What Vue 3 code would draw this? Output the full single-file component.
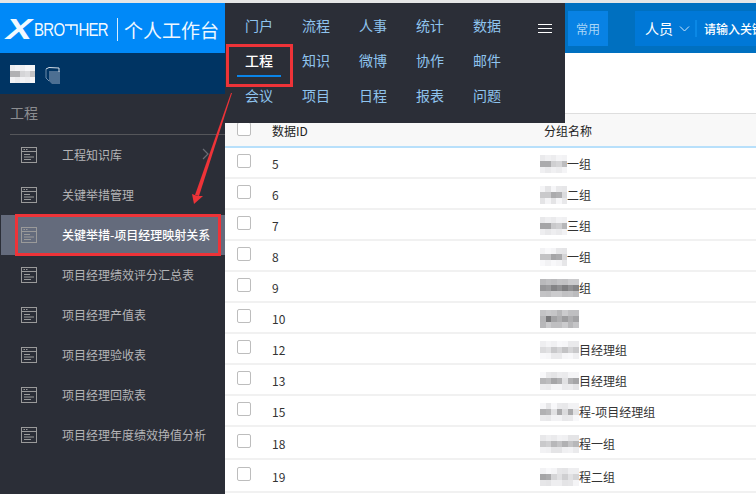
<template>
  <div class="page">
    <div class="top-strip"></div>

    <header class="header">
      <div class="brand">
        <span class="logo"><b class="logo-x">X</b><span class="logo-word">BRO</span><svg class="logo-t" viewBox="0 0 13 16" width="13" height="16"><path d="M0 4h12v10M6 4v5" fill="none" stroke="#fff" stroke-width="1.4" /></svg><span class="logo-word">HER</span></span>
        <span class="brand-line"></span>
        <span class="brand-title">个人工作台</span>
      </div>
      <div class="header-right">
        <span class="common">常用</span>
        <div class="search">
          <span class="search-type">人员</span>
          <svg class="chev" viewBox="0 0 11 6" width="11" height="6"><path d="M1 .5l4.5 4.5L10 .5" fill="none" stroke="#cfe6fa" stroke-width="1" /></svg>
          <span class="search-sep"></span>
          <span class="search-text">请输入关键</span>
        </div>
      </div>
    </header>

    <div class="content">
      <aside class="sidebar">
        <div class="user-bar">
          <Mosaic :cols="5" :rows="3" :width="25" :seed="3" dark />
          <svg viewBox="0 0 16 18" width="16" height="18" class="user-icon">
            <path d="M4 5h11v13H7l-3-3z" fill="#4d6f92" />
            <path d="M1 3l3-1.500 10 .5v4" fill="none" stroke="#d5dde6" stroke-width="1" />
            <path d="M1 3v9l3 3" fill="none" stroke="#6f8cab" stroke-width="1" />
          </svg>
        </div>
        <div class="side-title">工程</div>
        <ul class="side-menu">
          <li v-for="item in menu" :key="item" :class="['side-item', { active: item === activeItem }]">
            <svg class="doc" viewBox="0 0 16 16" width="16" height="16">
              <rect x="0.5" y="0.5" width="15" height="15" fill="none" stroke="#9a9a9a" />
              <path d="M1 4.500h14M3 7.500h6M3 10h10M3 12.500h7M2.500 2.500h1.500M5 2.500h1.500" fill="none" stroke="#9a9a9a" stroke-width="1" />
            </svg>
            <span>{{ item }}</span>
            <svg v-if="item === menu[0]" class="side-arrow" viewBox="0 0 8 12" width="8" height="12">
              <path d="M1 1l5 5-5 5" fill="none" stroke="#6a6d75" stroke-width="1.2" />
            </svg>
          </li>
        </ul>
      </aside>

      <main class="main">
        <div class="toolbar"></div>
        <div class="row head">
          <span class="check"></span>
          <span class="col-id">数据ID</span>
          <span class="col-name">分组名称</span>
        </div>
        <div v-for="(row, i) in rows" :key="row.id" :class="['row', { tall: i > 8 }]">
          <span class="check"></span>
          <span class="col-id">{{ row.id }}</span>
          <span class="col-name">
            <Mosaic class="blur" :cols="row.cols" :rows="3" :width="row.width" :seed="row.id" :deep="row.deep" />
            <span class="name-text">{{ row.name }}</span>
          </span>
        </div>
      </main>
    </div>

    <nav class="nav-panel">
      <div class="nav-grid">
        <a v-for="item in nav" :key="item" :class="['nav-item', { current: item === '工程' }]">{{ item }}</a>
      </div>
      <span class="burger"><i></i><i></i><i></i></span>
    </nav>

    <div class="mark side-mark"></div>
    <svg class="pointer" viewBox="0 0 756 494" width="756" height="494">
      <path d="M231 93L232 93 199 196 195 195z" fill="#ee3338" />
      <path d="M192 194L194 204 203 196 197.500 196z" fill="#ee3338" />
    </svg>
  </div>
</template>

<script setup>
import { h } from "vue"

// pixelated patch standing in for the blurred-out names
const Mosaic = (props) => {
  const cells = []
  const total = props.cols * props.rows
  for (let i = 0; i < total; i++) {
    const line = Math.floor(i / props.cols)
    const n = (i * i * 3 + props.seed * 5) % 11
    let background
    if (props.dark) {
      const v = line === 2 ? 235 : 95 + n * 9
      background = `rgb(${v},${v + 8},${v + 25})`
    } else {
      const base = line === 1 ? 165 : 228
      const spread = line === 1 ? 6 : 2
      const v = base + n * spread - (props.deep ? 45 : 0)
      background = `rgb(${v},${v},${v + 2})`
    }
    cells.push(h("i", { style: { width: 100 / props.cols + "%", height: (props.dark ? 5 : 6) + "px", background } }))
  }
  return h("span", {
    class: "mosaic",
    style: { width: props.width + "px", display: "inline-flex", flexWrap: "wrap", flexShrink: 0 }
  }, cells)
}
Mosaic.props = ["cols", "rows", "width", "seed", "dark", "deep"]

const activeItem = "关键举措-项目经理映射关系"

const menu = [
  "工程知识库",
  "关键举措管理",
  "关键举措-项目经理映射关系",
  "项目经理绩效评分汇总表",
  "项目经理产值表",
  "项目经理验收表",
  "项目经理回款表",
  "项目经理年度绩效挣值分析"
]

const nav = [
  "门户", "流程", "人事", "统计", "数据",
  "工程", "知识", "微博", "协作", "邮件",
  "会议", "项目", "日程", "报表", "问题"
]

const rows = [
  { id: 5, cols: 5, width: 27, name: "一组" },
  { id: 6, cols: 5, width: 27, name: "二组" },
  { id: 7, cols: 5, width: 27, name: "三组" },
  { id: 8, cols: 5, width: 27, name: "一组" },
  { id: 9, cols: 7, width: 39, name: "组", deep: true },
  { id: 10, cols: 7, width: 39, name: "", deep: true },
  { id: 12, cols: 7, width: 39, name: "目经理组" },
  { id: 13, cols: 7, width: 39, name: "目经理组" },
  { id: 15, cols: 7, width: 39, name: "程-项目经理组" },
  { id: 18, cols: 7, width: 39, name: "程一组" },
  { id: 19, cols: 7, width: 39, name: "程二组" }
]
</script>

<style>
html, body {
  margin: 0;
  background: #fff;
}
</style>

<style scoped>
.page {
  position: relative;
  width: 756px;
  height: 494px;
  overflow: hidden;
  font-family: "Noto Sans CJK SC", "Liberation Sans", sans-serif;
  font-size: 12px;
  color: #333;
}

.top-strip {
  height: 3px;
  background: #e6e6e6;
}

.header {
  display: flex;
  height: 50px;
  background: #0070c0;
}

.brand {
  width: 225px;
  flex-shrink: 0;
  display: flex;
  align-items: center;
  padding: 2px 0 0 6px;
  box-sizing: border-box;
  background: #0089f8;
  color: #fff;
}

.logo {
  display: flex;
  align-items: center;
  width: 105px;
  flex-shrink: 0;
  font-family: "Liberation Sans", sans-serif;
  font-size: 15px;
  color: #f2f9ff;
}

.logo-x {
  display: inline-block;
  width: 28px;
  font-size: 30px;
  font-style: italic;
  transform: scaleX(1.3);
  transform-origin: left center;
}

.logo-word {
  display: inline-block;
  letter-spacing: -0.7px;
  transform: scaleY(1.25);
}

.logo-t {
  flex-shrink: 0;
  margin-left: 1px;
}

.brand-line {
  width: 1px;
  height: 23px;
  margin: 0 6px;
  flex-shrink: 0;
  background: #d5ecff;
}

.brand-title {
  font-size: 19px;
  white-space: nowrap;
  color: #eef7ff;
}

.header-right {
  flex: 1;
  min-width: 0;
  display: flex;
  align-items: center;
  padding-left: 343px;
}

.common {
  width: 40px;
  height: 35px;
  margin-right: 27px;
  flex-shrink: 0;
  line-height: 35px;
  text-align: center;
  background: #0882e4;
  color: #a9d6f7;
}

.search {
  flex: 1;
  min-width: 0;
  height: 35px;
  display: flex;
  align-items: center;
  padding-left: 10px;
  background: #0078d7;
  color: #fff;
  white-space: nowrap;
  overflow: hidden;
}

.search-type {
  font-size: 14px;
}

.chev {
  margin: 1px 5px 0 6px;
  flex-shrink: 0;
}

.search-sep {
  width: 2px;
  height: 17px;
  margin-right: 7px;
  flex-shrink: 0;
  background: #0a88e6;
}

.search-text {
  font-weight: 500;
}

.content {
  display: flex;
  height: 441px;
}

.sidebar {
  width: 225px;
  flex-shrink: 0;
  background: #2b2e37;
}

.user-bar {
  height: 41px;
  display: flex;
  align-items: center;
  gap: 10px;
  padding-left: 10px;
  box-sizing: border-box;
  background: #003463;
}

.user-icon {
  margin-top: 2px;
}

.side-title {
  height: 41px;
  margin-left: 10px;
  line-height: 37px;
  box-sizing: border-box;
  border-bottom: 1px solid #55565a;
  font-size: 14px;
  color: #8c8d91;
}

.side-menu {
  margin: 0;
  padding: 0;
  list-style: none;
}

.side-item {
  position: relative;
  height: 40px;
  display: flex;
  align-items: center;
  margin-left: 1px;
  padding-left: 20px;
  color: #b4b4b6;
}

.side-item span {
  margin: 0 0 2px 25px;
  white-space: nowrap;
}

.side-item.active {
  background: #646b7c;
  color: #fff;
  font-weight: 500;
}

.side-arrow {
  position: absolute;
  right: 15px;
  top: 13px;
}

.main {
  flex: 1;
  min-width: 0;
}

.toolbar {
  height: 60px;
  background: #fff;
}

.row {
  height: 31px;
  display: flex;
  align-items: center;
  box-sizing: border-box;
  border-bottom: 2px solid #f1f1f1;
  color: #333;
}

.row.tall {
  height: 33px;
}

.row.head {
  height: 35px;
  background: #f8f8f8;
  border-top: 1px solid #dedede;
  border-bottom: 2px solid #b8e0fb;
  color: #222;
}

.check {
  width: 14px;
  height: 14px;
  margin: -3px 0 0 12px;
  box-sizing: border-box;
  flex-shrink: 0;
  border: 1px solid #bdbdbd;
  border-radius: 2px;
  background: #fff;
}

.col-id {
  width: 272px;
  margin-left: 21px;
  flex-shrink: 0;
  padding-top: 2px;
  box-sizing: border-box;
}

.head .col-id,
.head .col-name {
  padding-top: 0;
}

.col-name {
  display: flex;
  align-items: center;
  padding-top: 2px;
  white-space: nowrap;
}

.blur {
  margin-left: -4px;
}

.nav-panel {
  position: absolute;
  left: 225px;
  top: 3px;
  width: 340px;
  height: 120px;
  background: #2b2e37;
}

.nav-grid {
  display: grid;
  grid-template-columns: repeat(5, 57px);
  grid-auto-rows: 35px;
  padding: 5px 0 0 12px;
}

.nav-item {
  width: 44px;
  line-height: 35px;
  text-align: center;
  font-size: 14px;
  color: #8fc4ee;
}

.nav-item.current {
  position: relative;
  color: #fff;
  font-weight: 500;
}

.nav-item.current::before {
  content: "";
  position: absolute;
  left: 0;
  top: 32px;
  width: 44px;
  height: 2px;
  background: #0a84e8;
}

.nav-item.current::after {
  content: "";
  position: absolute;
  left: -11px;
  top: 1px;
  width: 61px;
  height: 37px;
  border: 3px solid #ee3338;
}

.burger {
  position: absolute;
  left: 313px;
  top: 21px;
  display: grid;
  gap: 3px;
}

.burger i {
  display: block;
  width: 14px;
  height: 1px;
  background: #fff;
}

.mark {
  position: absolute;
  border: 3px solid #ee3338;
  box-sizing: border-box;
}

.side-mark {
  left: 15px;
  top: 214px;
  width: 206px;
  height: 42px;
}

.pointer {
  position: absolute;
  left: 0;
  top: 0;
  pointer-events: none;
}
</style>
